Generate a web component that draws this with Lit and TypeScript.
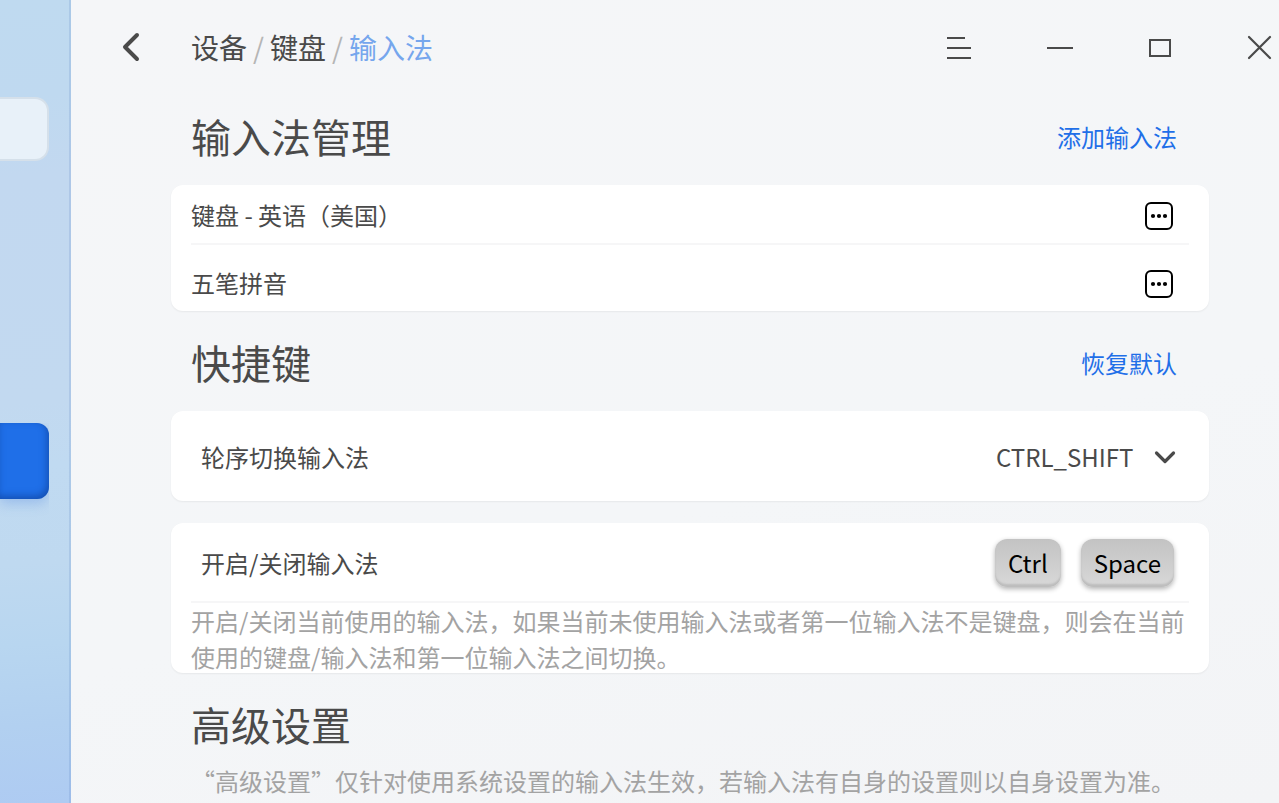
import { LitElement, html, css } from "lit";
import { customElement, property, state } from "lit/decorators.js";

@customElement("settings-card")
class SettingsCard extends LitElement {
  static styles = css`
    :host {
      display: block;
      background: #fff;
      border-radius: 12px;
      box-shadow: 0 1px 2px rgba(0, 0, 0, 0.06);
      padding: 0 20px;
    }
  `;
  render() {
    return html`<slot></slot>`;
  }
}

@customElement("section-head")
class SectionHead extends LitElement {
  @property() heading = "";
  @property() action = "";

  static styles = css`
    :host {
      display: flex;
      align-items: center;
      justify-content: space-between;
      padding: 21px 32px 0 20px;
    }
    h2 {
      margin: 0;
      font-size: 40px;
      line-height: 60px;
      font-weight: 400;
    }
    button {
      border: 0;
      padding: 2px 0 0;
      background: none;
      font: inherit;
      color: #1f6fe8;
      cursor: pointer;
    }
  `;
  render() {
    return html`<h2>${this.heading}</h2>
      ${this.action ? html`<button type="button">${this.action}</button>` : ""}`;
  }
}

@customElement("app-root")
class AppRoot extends LitElement {
  @state() private methods = ["键盘 - 英语（美国）", "五笔拼音"];
  @state() private keys = ["Ctrl", "Space"];

  static styles = css`
    :host {
      display: grid;
      grid-template-columns: 71px minmax(0, 1fr);
      min-height: 100vh;
      font-family: "Noto Sans CJK SC", sans-serif;
      font-size: 24px;
      line-height: 36px;
      color: #4a4a4a;
    }
    * {
      box-sizing: border-box;
    }
    aside {
      display: flex;
      flex-direction: column;
      padding: 97px 20px 0 0;
      border-right: 2px solid rgba(60, 110, 180, 0.15);
      background: linear-gradient(
        176deg,
        #bfdaf0 0%,
        #bfd9f0 12%,
        #c2d8f0 22%,
        #c2d9f0 50%,
        #c0daf1 58%,
        #bfd9f0 70%,
        #b8d6f0 80%,
        #b2d0f0 90%,
        #aecbf2 100%
      );
    }
    .search {
      width: 100%;
      height: 64px;
      border: 2px solid #d5e0ea;
      border-left: 0;
      border-radius: 0 14px 14px 0;
      background: #e8f1f9;
      outline: none;
    }
    .current {
      height: 76px;
      margin-top: 262px;
      padding: 0;
      border: 0;
      border-radius: 0 12px 12px 0;
      background: #1f6fe8;
      box-shadow: inset -2px -3px 7px rgba(10, 50, 130, 0.5), 0 5px 12px rgba(90, 140, 225, 0.35);
      clip-path: inset(0 0 -20px 0);
    }
    main {
      background: linear-gradient(165deg, #f5f6f8 0%, #f4f6f8 60%, #f3f4f6 100%);
    }
    header {
      display: flex;
      align-items: center;
      justify-content: space-between;
      height: 85px;
      padding: 11px 0 0 44px;
    }
    .path,
    .tools {
      display: flex;
      align-items: center;
    }
    .icon {
      display: grid;
      place-items: center;
      width: 40px;
      height: 40px;
      padding: 0;
      border: 0;
      background: none;
      color: #4a4a4a;
    }
    .crumbs {
      display: flex;
      gap: 6px;
      margin-left: 36px;
      padding-bottom: 2px;
      font-size: 28px;
      line-height: 38px;
      color: #b5b5b5;
    }
    .crumbs a {
      color: #4a4a4a;
      text-decoration: none;
    }
    .crumbs a.here {
      color: #76a6ed;
    }
    .tools {
      gap: 60px;
    }
    .page {
      padding: 0 70px 0 100px;
    }
    settings-card {
      margin-top: 19px;
    }
    settings-card + settings-card {
      margin-top: 22px;
    }
    ul {
      list-style: none;
      margin: 0;
      padding: 0;
    }
    li {
      display: flex;
      align-items: center;
      justify-content: space-between;
      height: 58px;
      padding: 4px 10px 0 0;
    }
    li span {
      padding-bottom: 2px;
    }
    li + li {
      height: 68px;
      padding-top: 12px;
      border-top: 2px solid #f6f6f7;
    }
    .row {
      display: flex;
      align-items: center;
      justify-content: space-between;
    }
    .tall {
      height: 90px;
      padding: 2px 13px 0 10px;
    }
    .short {
      height: 78px;
      padding: 2px 15px 0 10px;
    }
    .picker {
      display: grid;
      align-items: center;
    }
    .picker > * {
      grid-area: 1 / 1;
    }
    .picker svg {
      justify-self: end;
      pointer-events: none;
    }
    select {
      appearance: none;
      border: 0;
      padding: 0 42px 0 0;
      background: none;
      font: inherit;
      color: inherit;
      outline: none;
    }
    .keys {
      display: flex;
      gap: 20px;
    }
    kbd {
      height: 48px;
      padding: 0 13px;
      border-radius: 12px;
      background: linear-gradient(#c3c3c3, #d8d8d8);
      box-shadow: inset 0 -3px 2px #bdbdbd, 0 2px 5px rgba(0, 0, 0, 0.3);
      font-family: inherit;
      line-height: 48px;
      color: #000;
    }
    p {
      margin: 0;
      color: #a3a3a3;
    }
    .hint {
      height: 72px;
      border-top: 2px solid #f6f6f7;
    }
    .note {
      margin-top: 9px;
      padding: 0 20px;
    }
  `;

  render() {
    return html`
      <aside>
        <input class="search" type="search" aria-label="搜索" />
        <button class="current" type="button" aria-label="设备"></button>
      </aside>
      <main>
        <header>
          <div class="path">
            <button class="icon" type="button" aria-label="返回">
              <svg width="40" height="40" viewBox="0 0 40 40" fill="none" stroke="currentColor" stroke-width="4" stroke-linecap="round" stroke-linejoin="round">
                <path d="M22 7 L10 19 L22 31" />
              </svg>
            </button>
            <nav class="crumbs">
              <a href="#device">设备</a><span>/</span>
              <a href="#keyboard">键盘</a><span>/</span>
              <a class="here" href="#ime">输入法</a>
            </nav>
          </div>
          <div class="tools">
            <button class="icon" type="button" aria-label="菜单">
              <svg width="40" height="40" viewBox="0 0 40 40" stroke="currentColor" stroke-width="2">
                <path d="M8 10H26M8 20H32M8 30H32" />
              </svg>
            </button>
            <button class="icon" type="button" aria-label="最小化">
              <svg width="40" height="40" viewBox="0 0 40 40" stroke="currentColor" stroke-width="2">
                <path d="M8 20H34" />
              </svg>
            </button>
            <button class="icon" type="button" aria-label="最大化">
              <svg width="40" height="40" viewBox="0 0 40 40" fill="none" stroke="currentColor" stroke-width="2">
                <rect x="11" y="12" width="20" height="16" />
              </svg>
            </button>
            <button class="icon" type="button" aria-label="关闭">
              <svg width="40" height="40" viewBox="0 0 40 40" stroke="currentColor" stroke-width="2.2" stroke-linecap="round">
                <path d="M10 9L31 30M31 9L10 30" />
              </svg>
            </button>
          </div>
        </header>
        <div class="page">
          <section-head heading="输入法管理" action="添加输入法"></section-head>
          <settings-card>
            <ul>
              ${this.methods.map(
                (name) => html`<li>
                  <span>${name}</span>
                  <button class="icon" type="button" aria-label="更多：${name}">
                    <svg width="28" height="28" viewBox="0 0 28 28" fill="none" stroke="#000" stroke-width="2">
                      <rect x="1" y="1" width="26" height="26" rx="5" />
                      <g fill="#000" stroke="none">
                        <circle cx="8" cy="14" r="2.1" />
                        <circle cx="14" cy="14" r="2.1" />
                        <circle cx="20" cy="14" r="2.1" />
                      </g>
                    </svg>
                  </button>
                </li>`
              )}
            </ul>
          </settings-card>

          <section-head heading="快捷键" action="恢复默认"></section-head>
          <settings-card>
            <div class="row tall">
              <label for="switch">轮序切换输入法</label>
              <div class="picker">
                <select id="switch">
                  <option>CTRL_SHIFT</option>
                </select>
                <svg width="22" height="16" viewBox="0 0 22 16" fill="none" stroke="currentColor" stroke-width="3.2" stroke-linecap="round" stroke-linejoin="round">
                  <path d="M2.5 4 L11 12.5 L19.5 4" />
                </svg>
              </div>
            </div>
          </settings-card>
          <settings-card>
            <div class="row short">
              <span>开启/关闭输入法</span>
              <div class="keys">${this.keys.map((key) => html`<kbd>${key}</kbd>`)}</div>
            </div>
            <p class="hint">开启/关闭当前使用的输入法，如果当前未使用输入法或者第一位输入法不是键盘，则会在当前使用的键盘/输入法和第一位输入法之间切换。</p>
          </settings-card>

          <section-head heading="高级设置"></section-head>
          <p class="note">“高级设置”仅针对使用系统设置的输入法生效，若输入法有自身的设置则以自身设置为准。</p>
        </div>
      </main>
    `;
  }
}
